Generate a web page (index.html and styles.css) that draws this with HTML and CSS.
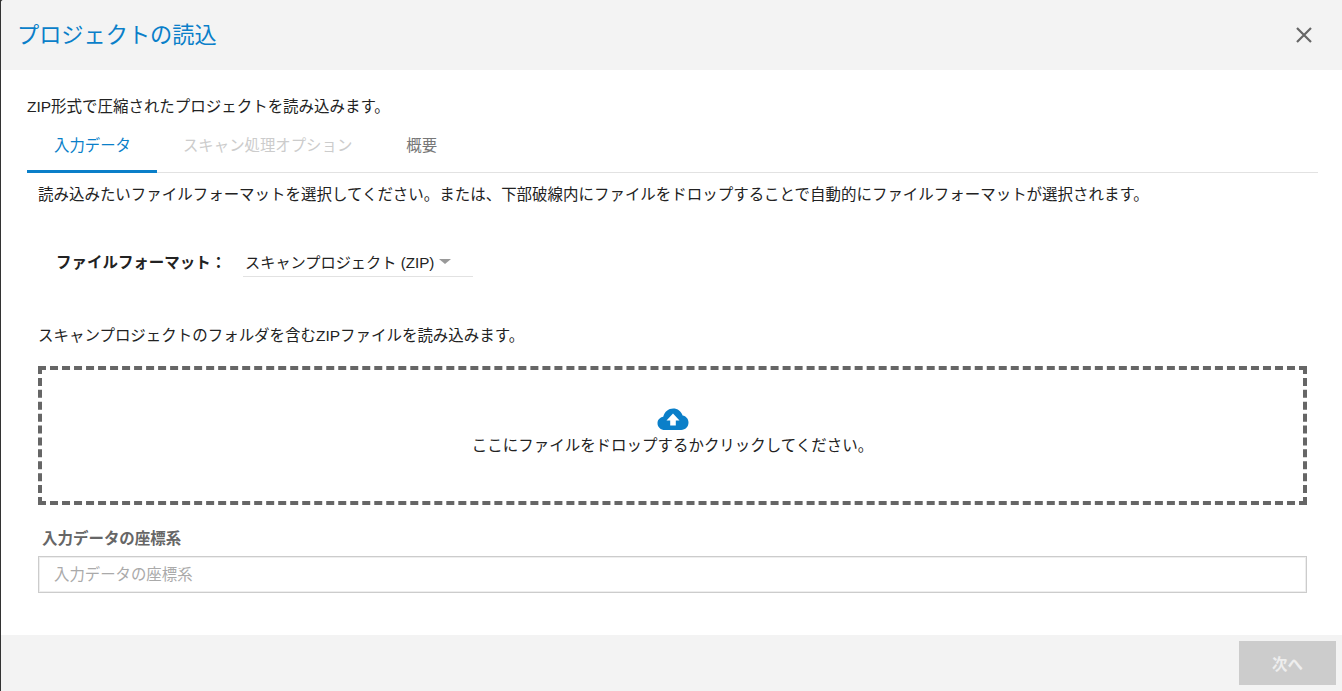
FILE: index.html
```html
<!DOCTYPE html>
<html lang="ja">
<head>
    <meta charset="UTF-8">
    <meta name="viewport" content="width=device-width, initial-scale=1.0">
    <title>プロジェクトの読込</title>
    <link rel="stylesheet" href="styles.css">
</head>
<body>
    <div class="modal">
        <header class="modal-header">
            <h1 class="modal-title">プロジェクトの読込</h1>
            <button class="close-btn" type="button" aria-label="閉じる">
                <svg width="16" height="16" viewBox="0 0 16 16"><path d="M1 1L15 15M15 1L1 15" stroke="#666" stroke-width="2.2" fill="none"/></svg>
            </button>
        </header>

        <main class="modal-body">
            <p class="intro">ZIP形式で圧縮されたプロジェクトを読み込みます。</p>

            <nav class="tabs">
                <a class="tab active">入力データ</a>
                <a class="tab disabled">スキャン処理オプション</a>
                <a class="tab">概要</a>
            </nav>

            <div class="tab-content">
                <p class="help">読み込みたいファイルフォーマットを選択してください。または、下部破線内にファイルをドロップすることで自動的にファイルフォーマットが選択されます。</p>

                <div class="format-row">
                    <label class="format-label">ファイルフォーマット：</label>
                    <div class="format-select">
                        <span>スキャンプロジェクト (ZIP)</span>
                        <span class="caret"></span>
                    </div>
                </div>

                <p class="format-note">スキャンプロジェクトのフォルダを含むZIPファイルを読み込みます。</p>

                <div class="dropzone">
                    <svg class="cloud" width="32" height="22" viewBox="0 0 32 22">
                        <path fill="#0a7fc9" d="M8 22C3.6 22 0.5 19 0.5 15.2C0.5 11.8 3 9.2 6.2 8.7C7.6 3.6 11.6 0.5 16.2 0.5C20.6 0.5 24.3 3.2 25.6 7.6C29 8.2 31.5 11 31.5 14.6C31.5 18.8 28.4 22 24.2 22Z"/>
                        <path fill="#fff" d="M16 5.5L22.5 12.5H18.8V17.5H13.2V12.5H9.5Z"/>
                    </svg>
                    <span>ここにファイルをドロップするかクリックしてください。</span>
                </div>

                <label class="crs-label" for="crs">入力データの座標系</label>
                <input class="crs-input" id="crs" type="text" placeholder="入力データの座標系">
            </div>
        </main>

        <footer class="modal-footer">
            <button class="next-btn" type="button" disabled>次へ</button>
        </footer>
    </div>
</body>
</html>
```

FILE: styles.css
```css
* {
    box-sizing: border-box;
}

html,
body {
    height: 100%;
}

body {
    margin: 0;
    background-color: #333;
    color: #222;
    font-family: "Liberation Sans", "Noto Sans CJK JP", sans-serif;
    font-size: 15.47px;
    overflow: hidden;
}

.modal {
    display: flex;
    flex-direction: column;
    height: 691px;
    margin-left: 1px;
    background-color: #fff;
    border-top-left-radius: 3px;
}

.modal-header {
    display: flex;
    align-items: center;
    justify-content: space-between;
    height: 70px;
    flex-shrink: 0;
    padding: 0 30px 4px 16px;
    background-color: #f3f3f3;
    border-top-left-radius: 3px;
}

.modal-title {
    margin: 0;
    color: #0a7fc9;
    font-size: 22.2px;
    font-weight: normal;
}

.close-btn {
    display: flex;
    padding: 0;
    margin-top: 4px;
    background: none;
    border: none;
    cursor: pointer;
}

.modal-body {
    flex: 1;
    padding: 27px 24px 0 26px;
}

.intro {
    margin: 0;
    line-height: 20px;
}

.tabs {
    display: flex;
    height: 56px;
    border-bottom: 1px solid #e2e2e2;
}

.tab {
    display: flex;
    align-items: center;
    height: 56px;
    padding: 0 26px 3px 26px;
    color: #777;
    font-size: 15.4px;
}

.tab.active {
    color: #0a7fc9;
    border-bottom: 3px solid #0a7fc9;
    padding-left: 27px;
    padding-bottom: 0;
}

.tab.disabled {
    color: #ccc;
    padding-right: 28px;
}

.tab-content {
    padding-left: 11px;
    padding-right: 11px;
}

.help {
    margin: 12px 0 0;
    line-height: 20px;
}

.format-row {
    display: flex;
    align-items: center;
    margin-top: 39px;
    padding-left: 18px;
}

.format-label {
    width: 187px;
    font-weight: bold;
}

.format-select {
    display: flex;
    align-items: center;
    gap: 5px;
    width: 230px;
    height: 33px;
    padding: 2px 2px 0;
    border-bottom: 1px solid #e2e2e2;
    font-size: 15.2px;
}

.caret {
    border-left: 6px solid transparent;
    border-right: 6px solid transparent;
    border-top: 5px solid #999;
}

.format-note {
    margin: 49px 0 0;
    line-height: 20px;
}

.dropzone {
    display: flex;
    flex-direction: column;
    align-items: center;
    justify-content: center;
    height: 139px;
    margin-top: 20px;
    padding-bottom: 8px;
    border: 4px dashed #666;
    cursor: pointer;
}

.cloud {
    margin-bottom: 3px;
}

.crs-label {
    display: block;
    margin-top: 24px;
    padding-left: 4px;
    color: #666;
    font-weight: bold;
    line-height: 20px;
}

.crs-input {
    display: block;
    width: 100%;
    height: 37px;
    margin-top: 7px;
    padding: 0 15px;
    border: 1px solid #ccc;
    box-shadow: inset 0 0 0 1px #eee;
    font-family: inherit;
    font-size: 15.4px;
}

.crs-input::placeholder {
    color: #aaa;
}

.modal-footer {
    display: flex;
    justify-content: flex-end;
    height: 56px;
    flex-shrink: 0;
    padding: 6px 6px 6px 0;
    background-color: #f3f3f3;
}

.next-btn {
    width: 97px;
    height: 44px;
    background-color: #ccc;
    color: #eee;
    border: none;
    font-family: inherit;
    font-size: 15.4px;
    font-weight: bold;
}
```
